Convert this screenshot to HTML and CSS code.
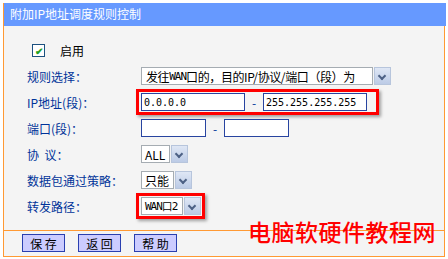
FILE: index.html
```html
<!DOCTYPE html>
<html lang="zh">
<head>
    <meta charset="UTF-8">
    <title>附加IP地址调度规则控制</title>
    <link rel="stylesheet" href="styles.css">
</head>
<body>

<div class="panel">
    <div class="panel-title">附加IP地址调度规则控制</div>

    <div class="panel-body">
        <div class="row row-check">
            <span class="checkbox">&#10004;</span>
            <span class="check-label">启用</span>
        </div>

        <div class="row">
            <span class="label">规则选择：</span>
            <div class="select">
                <span class="select-text wide">发往<span class="mono">WAN</span>口的，目的IP/协议/端口（段）为</span>
                <span class="arrow"></span>
            </div>
        </div>

        <div class="row">
            <span class="label">IP地址(段)：</span>
            <div class="mark mark-ip">
                <span class="input ip">0.0.0.0</span>
                <span class="dash">-</span>
                <span class="input ip">255.255.255.255</span>
            </div>
        </div>

        <div class="row">
            <span class="label">端口(段)：</span>
            <span class="input port"></span>
            <span class="dash">-</span>
            <span class="input port"></span>
        </div>

        <div class="row">
            <span class="label">协&nbsp;&nbsp;议：</span>
            <div class="select">
                <span class="select-text">ALL</span>
                <span class="arrow"></span>
            </div>
        </div>

        <div class="row">
            <span class="label">数据包通过策略：</span>
            <div class="select">
                <span class="select-text">只能</span>
                <span class="arrow"></span>
            </div>
        </div>

        <div class="row">
            <span class="label">转发路径：</span>
            <div class="mark mark-route">
                <div class="select">
                    <span class="select-text mono">WAN口2</span>
                    <span class="arrow"></span>
                </div>
            </div>
        </div>
    </div>

    <div class="panel-foot">
        <button class="btn">保&nbsp;存</button>
        <button class="btn">返&nbsp;回</button>
        <button class="btn">帮&nbsp;助</button>
    </div>

    <div class="watermark">电脑软硬件教程网</div>
</div>

</body>
</html>
```

FILE: styles.css
```css
body {
    margin: 0;
    background: #fff;
    font-family: "Noto Sans CJK SC", sans-serif;
    font-size: 12px;
}

.panel {
    position: relative;
    margin: 3px 3px 0 3px;
    width: 440px;
    background: #f4f4f4;
    border-left: 1px solid #ff9933;
    border-right: 1px solid #ff9933;
    border-bottom: 1px solid #ff9933;
}

.panel-title {
    height: 23px;
    line-height: 22px;
    margin-right: -2px;
    padding-left: 6px;
    background: #6699ff;
    color: #fff;
    font-size: 12px;
}

.panel-body {
    padding: 14px 0 11px 23px;
    border-bottom: 1px solid #ff9933;
}

.row {
    display: flex;
    align-items: center;
    height: 26px;
    color: #003399;
    white-space: nowrap;
}

.row-check {
    height: 24px;
    margin-top: -2px;
    margin-bottom: 1px;
}

.checkbox {
    width: 11px;
    height: 11px;
    margin-left: 5px;
    border: 1px solid #1c5180;
    background: #fff;
    color: #21a121;
    font-size: 10px;
    line-height: 11px;
    text-align: center;
    font-weight: bold;
}

.check-label {
    margin-left: 15px;
    color: #000;
}

.label {
    width: 114px;
}

.select {
    display: flex;
    height: 18px;
}

.select-text {
    display: flex;
    align-items: center;
    padding: 0 4px 0 3px;
    border: 1px solid #a5acb2;
    background: #fff;
    color: #000;
    white-space: nowrap;
    overflow: hidden;
}

.select-text.wide {
    width: 224px;
    padding: 0 2px 0 4px;
    letter-spacing: -0.4px;
}

.mono {
    font-family: "DejaVu Sans Mono", monospace;
    font-size: 11px;
    letter-spacing: -1px;
}

.arrow {
    position: relative;
    width: 15px;
    margin-left: 1px;
    border: 1px solid #b7c5dc;
    background: linear-gradient(#dfe7f5, #bccbe6);
}

.arrow::after {
    content: "";
    position: absolute;
    left: 4px;
    top: 5px;
    width: 4px;
    height: 4px;
    border-right: 2px solid #4d6185;
    border-bottom: 2px solid #4d6185;
    transform: rotate(45deg);
}

.input {
    display: flex;
    align-items: center;
    height: 16px;
    border: 1px solid #2844a0;
    background: #fff;
    color: #000;
    padding-left: 2px;
    font-family: "DejaVu Sans Mono", monospace;
    font-size: 10px;
}

.input.ip {
    width: 100px;
}

.input.port {
    width: 61px;
}

.dash {
    width: 18px;
    text-align: center;
    color: #003399;
}

.mark {
    display: flex;
    align-items: center;
    margin-left: -5px;
    padding: 1px 9px 1px 2px;
    border: 3px solid #ff0000;
    box-shadow: 2px 2px 3px rgba(0, 0, 0, 0.35);
}

.mark-route {
    padding: 1px 1px 1px 2px;
}

.panel-foot {
    display: flex;
    gap: 13px;
    padding: 3px 0 4px 18px;
}

.btn {
    width: 43px;
    height: 18px;
    padding: 0;
    border: 1px solid #2a3fb0;
    background: #ccccff;
    color: #000;
    font-family: "Noto Sans CJK SC", sans-serif;
    font-size: 12px;
    line-height: 15px;
}

.watermark {
    position: absolute;
    left: 244px;
    top: 211px;
    color: #ff0000;
    font-size: 23px;
    font-weight: 500;
    letter-spacing: 0.5px;
}
```
